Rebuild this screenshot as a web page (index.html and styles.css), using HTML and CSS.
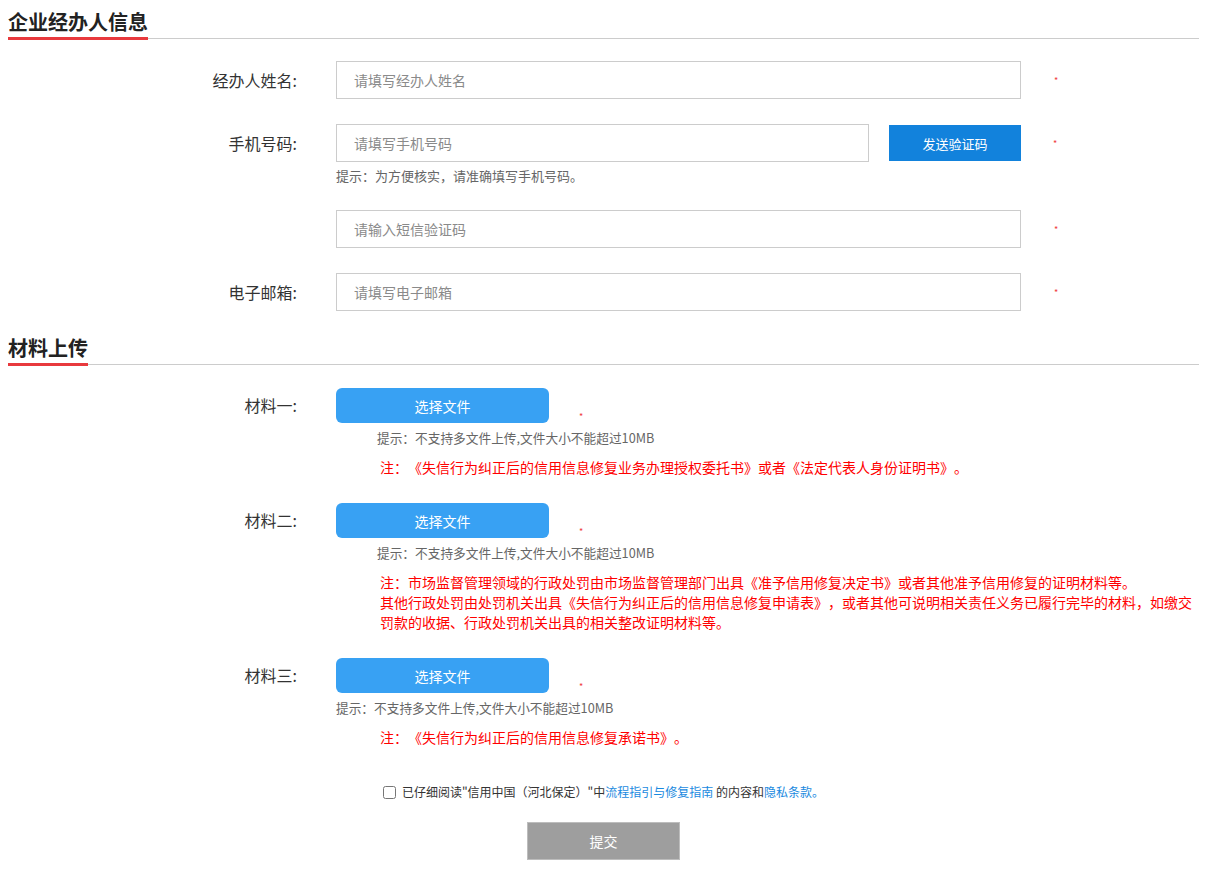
FILE: index.html
```html
<!DOCTYPE html>
<html lang="zh-CN">
<head>
<meta charset="utf-8">
<title>企业经办人信息</title>
<link rel="stylesheet" href="styles.css">
</head>
<body>
<div class="page">
  <h2 class="sec-title"><span>企业经办人信息</span></h2>

  <div class="row row-first">
    <label class="lbl">经办人姓名:</label>
    <div class="field">
      <input class="inp" type="text" placeholder="请填写经办人姓名">
    </div>
    <span class="req">*</span>
  </div>

  <div class="row">
    <label class="lbl">手机号码:</label>
    <div class="field">
      <div class="phone">
        <input class="inp inp-short" type="text" placeholder="请填写手机号码">
        <button class="btn-send" type="button">发送验证码</button>
      </div>
      <p class="hint">提示：为方便核实，请准确填写手机号码。</p>
    </div>
    <span class="req req-phone">*</span>
  </div>

  <div class="row">
    <label class="lbl"></label>
    <div class="field">
      <input class="inp" type="text" placeholder="请输入短信验证码">
    </div>
    <span class="req">*</span>
  </div>

  <div class="row">
    <label class="lbl">电子邮箱:</label>
    <div class="field">
      <input class="inp" type="text" placeholder="请填写电子邮箱">
    </div>
    <span class="req">*</span>
  </div>

  <h2 class="sec-title sec-title2"><span>材料上传</span></h2>

  <div class="mat">
    <div class="mat-row">
      <label class="lbl">材料一:</label>
      <button class="btn-file" type="button">选择文件</button>
      <span class="req req-file">*</span>
    </div>
    <p class="mhint indent">提示：不支持多文件上传,文件大小不能超过10MB</p>
    <p class="note">注：《失信行为纠正后的信用信息修复业务办理授权委托书》或者《法定代表人身份证明书》。</p>
  </div>

  <div class="mat">
    <div class="mat-row">
      <label class="lbl">材料二:</label>
      <button class="btn-file" type="button">选择文件</button>
      <span class="req req-file">*</span>
    </div>
    <p class="mhint indent">提示：不支持多文件上传,文件大小不能超过10MB</p>
    <p class="note note-wide">注：市场监督管理领域的行政处罚由市场监督管理部门出具《准予信用修复决定书》或者其他准予信用修复的证明材料等。<br>其他行政处罚由处罚机关出具《失信行为纠正后的信用信息修复申请表》，或者其他可说明相关责任义务已履行完毕的材料，如缴交罚款的收据、行政处罚机关出具的相关整改证明材料等。</p>
  </div>

  <div class="mat">
    <div class="mat-row">
      <label class="lbl">材料三:</label>
      <button class="btn-file" type="button">选择文件</button>
      <span class="req req-file">*</span>
    </div>
    <p class="mhint">提示：不支持多文件上传,文件大小不能超过10MB</p>
    <p class="note">注：《失信行为纠正后的信用信息修复承诺书》。</p>
  </div>

  <div class="agree">
    <input class="chk" type="checkbox">
    <span>已仔细阅读"信用中国（河北保定）"中<a href="#">流程指引与修复指南</a> 的内容和<a href="#">隐私条款。</a></span>
  </div>

  <div class="submit-wrap">
    <button class="btn-submit" type="button">提交</button>
  </div>
</div>
</body>
</html>
```
FILE: styles.css
```css
* { box-sizing: border-box; }
html, body { margin: 0; padding: 0; background: #fff; }
body {
  font-family: "Noto Sans CJK SC", "Noto Sans", "Liberation Sans", sans-serif;
  color: #333;
  text-spacing-trim: space-all;
}
.page { padding: 0 26px 0 8px; width: 1225px; }

.sec-title {
  margin: 0;
  padding-top: 8px;
  display: flex;
  border-bottom: 1px solid #ccc;
  font-size: 20px;
  font-weight: bold;
  line-height: 28px;
  color: #222;
}
.sec-title span {
  display: block;
  padding-bottom: 1px;
  border-bottom: 3px solid #e8393d;
  margin-bottom: -2px;
}
.sec-title2 { padding-top: 0; margin-top: -2px; }
.row-first { margin-top: 22px; }

.row {
  display: flex;
  align-items: flex-start;
  margin-bottom: 25px;
}
.lbl {
  width: 289px;
  flex: none;
  margin-right: 39px;
  text-align: right;
  font-size: 16px;
  line-height: 38px;
  color: #333;
}
.field { width: 685px; flex: none; }
.inp {
  display: block;
  width: 685px;
  height: 38px;
  border: 1px solid #ccc;
  padding: 0 17px;
  font-family: inherit;
  font-size: 14px;
  color: #333;
  outline: none;
  background: #fff;
}
.inp::placeholder { color: #8a8a8a; }
.phone { display: flex; align-items: center; gap: 20px; }
.inp-short { width: 533px; }
.btn-send {
  width: 132px;
  height: 36px;
  border: none;
  background: #1282dc;
  color: #fff;
  font-family: inherit;
  font-size: 13px;
  cursor: pointer;
}
.hint {
  margin: 5px 0 0;
  font-size: 13px;
  line-height: 18px;
  color: #666;
}
.req {
  margin-left: 33px;
  color: #f03c3c;
  font-size: 9px;
  line-height: 9px;
  margin-top: 15px;
}
.req-phone { margin-left: 32px; }

.mat { margin-top: 23px; }
.mat + .mat { margin-top: 26px; }
.mat-row { display: flex; align-items: flex-start; }
.mat-row .lbl { line-height: 35px; }
.btn-file {
  width: 213px;
  height: 35px;
  border: none;
  border-radius: 6px;
  background: #38a1f3;
  color: #fff;
  font-family: inherit;
  font-size: 14px;
  cursor: pointer;
}
.req-file { margin-left: 30px; margin-top: 24px; }
.mhint {
  margin: 6px 0 0 328px;
  font-size: 12.7px;
  line-height: 18px;
  color: #666;
}
.mhint.indent { margin-left: 369px; }
.note {
  margin: 10px 0 0 372px;
  font-size: 14px;
  line-height: 20px;
  color: #ff0000;
}
.note-wide { width: 820px; }

.agree {
  margin-top: 36px;
  display: flex;
  justify-content: center;
  align-items: center;
  font-size: 12px;
  line-height: 18px;
  color: #333;
}
.chk { width: 13px; height: 13px; margin: 0 6px 0 0; }
.agree a { color: #1a8ae0; text-decoration: none; }

.submit-wrap { display: flex; justify-content: center; margin-top: 21px; }
.btn-submit {
  width: 153px;
  height: 38px;
  border: 1px solid #bdbdbd;
  background: #9e9e9e;
  color: #fff;
  font-family: inherit;
  font-size: 14px;
}
```
